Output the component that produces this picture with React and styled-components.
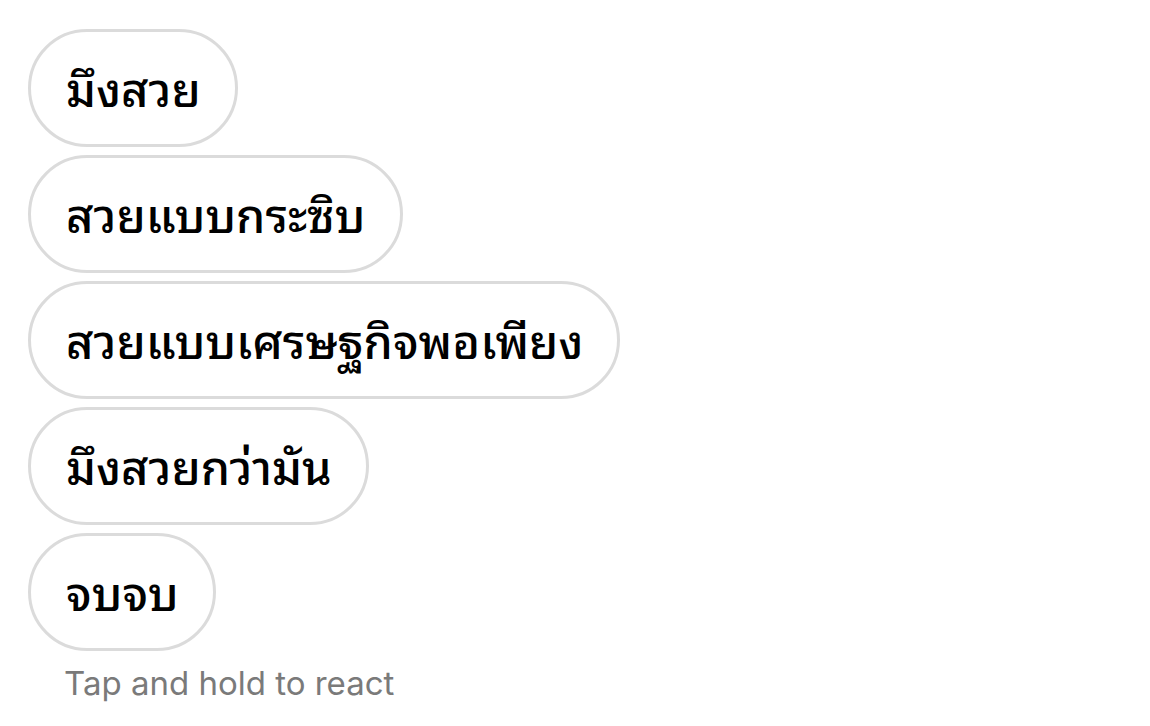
import React from 'react';
import styled, { createGlobalStyle } from 'styled-components';

const GlobalStyle = createGlobalStyle`
  html, body {
    margin: 0;
    background: #ffffff;
  }
`;

const Page = styled.div`
  display: flex;
  flex-direction: column;
  align-items: flex-start;
  gap: 8px;
  padding: 29px 0 0 28px;
`;

const Pill = styled.div`
  box-sizing: border-box;
  height: 118px;
  display: flex;
  align-items: center;
  padding: 0 34px 5px 35px;
  border: 3px solid #dbdbdb;
  border-radius: 59px;
  color: #000000;
  font-family: "Noto Sans Thai Looped", Loma, "Noto Sans", sans-serif;
  font-size: 47px;
  font-weight: 480;
  white-space: nowrap;
`;

const Hint = styled.div`
  margin: 4px 0 0 36px;
  color: #7a7a7a;
  font-family: Inter, "Liberation Sans", sans-serif;
  font-size: 33px;
`;

const replies = [
  'มึงสวย',
  'สวยแบบกระซิบ',
  'สวยแบบเศรษฐกิจพอเพียง',
  'มึงสวยกว่ามัน',
  'จบจบ',
];

export default function App() {
  return (
    <>
      <GlobalStyle />
      <Page>
        {replies.map((r) => (
          <Pill key={r}>{r}</Pill>
        ))}
        <Hint>Tap and hold to react</Hint>
      </Page>
    </>
  );
}
